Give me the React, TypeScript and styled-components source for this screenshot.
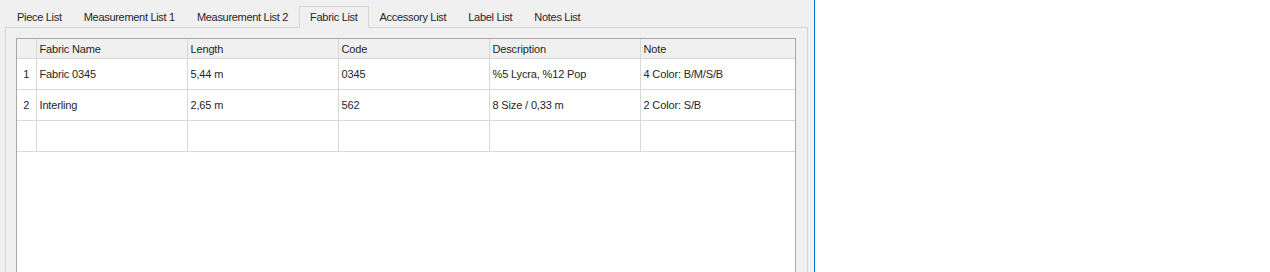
import React from 'react';
import styled, { createGlobalStyle } from 'styled-components';

const GlobalStyle = createGlobalStyle`
  html, body {
    margin: 0;
    padding: 0;
    background: #ffffff;
  }
  body {
    font-family: 'Liberation Sans', Arial, sans-serif;
    font-size: 11px;
    letter-spacing: -0.15px;
    color: #262626;
  }
`;

const tabs = [
  'Piece List',
  'Measurement List 1',
  'Measurement List 2',
  'Fabric List',
  'Accessory List',
  'Label List',
  'Notes List',
];

const columns = [
  { title: 'Fabric Name', width: 151 },
  { title: 'Length', width: 151 },
  { title: 'Code', width: 151 },
  { title: 'Description', width: 151 },
  { title: 'Note', width: 155 },
];

const rows = [
  ['Fabric 0345', '5,44 m', '0345', '%5 Lycra, %12 Pop', '4 Color: B/M/S/B'],
  ['Interling', '2,65 m', '562', '8 Size / 0,33 m', '2 Color: S/B'],
  ['', '', '', '', ''],
];

const App = () => {
  const active = 'Fabric List';

  return (
    <>
      <GlobalStyle />
      <Window>
        <TabBar>
          { tabs.map((tab) => (
            <Tab key={ tab } $active={ tab === active }>
              { tab }
            </Tab>
          )) }
        </TabBar>
        <Pane>
          <TableView>
            <Grid>
              <colgroup>
                <col style={{ width: 19 }} />
                { columns.map((c) => (
                  <col key={ c.title } style={{ width: c.width }} />
                )) }
              </colgroup>
              <thead>
                <tr>
                  <Corner />
                  { columns.map((c) => (
                    <HeadCell key={ c.title }>{ c.title }</HeadCell>
                  )) }
                </tr>
              </thead>
              <tbody>
                { rows.map((row, index) => (
                  <tr key={ index }>
                    <RowNumber>{ row[0] ? index + 1 : '' }</RowNumber>
                    { row.map((value, i) => (
                      <Cell key={ i }>{ value }</Cell>
                    )) }
                  </tr>
                )) }
              </tbody>
            </Grid>
          </TableView>
        </Pane>
      </Window>
    </>
  );
};

export default App;

const Window = styled.div`
  width: 814px;
  height: 272px;
  background: #f0f0f0;
  border-right: 1px solid #0078d7;
  display: flex;
  flex-direction: column;
  overflow: hidden;
`;

const TabBar = styled.div`
  display: flex;
  align-items: flex-end;
  padding: 6px 0 0 6px;
  height: 21px;
  position: relative;
  z-index: 1;
`;

const Tab = styled.div<{ $active: boolean }>`
  height: ${ (p) => (p.$active ? '22px' : '20px') };
  line-height: 19px;
  padding: 0 10px;
  box-sizing: border-box;
  white-space: nowrap;
  letter-spacing: -0.3px;
  background: #f0f0f0;
  border: 1px solid ${ (p) => (p.$active ? '#d4d4d4' : 'transparent') };
  border-bottom: none;
  margin-bottom: ${ (p) => (p.$active ? '-1px' : '0') };
  padding-top: ${ (p) => (p.$active ? '1px' : '0') };
`;

const Pane = styled.div`
  flex: 1;
  display: flex;
  margin-left: 5px;
  width: 803px;
  box-sizing: border-box;
  border: 1px solid #d4d4d4;
  border-bottom: none;
  padding: 10px 11px 0 10px;
`;

const TableView = styled.div`
  flex: 1;
  background: #ffffff;
  border: 1px solid #a8a8a8;
  border-bottom: none;
`;

const Grid = styled.table`
  border-collapse: collapse;
  table-layout: fixed;
  width: 778px;
`;

const HeadCell = styled.th`
  height: 19px;
  padding: 0 3px;
  background: #f0f0f0;
  border-left: 1px solid #d8d8d8;
  border-bottom: 1px solid #d8d8d8;
  font-weight: normal;
  text-align: left;
  white-space: nowrap;
`;

const Corner = styled(HeadCell)`
  border-left: none;
`;

const Cell = styled.td`
  height: 30px;
  padding: 0 3px;
  border-left: 1px solid #d8d8d8;
  border-bottom: 1px solid #d8d8d8;
  white-space: nowrap;
  overflow: hidden;
`;

const RowNumber = styled.td`
  height: 30px;
  padding: 0;
  text-align: center;
  border-bottom: 1px solid #d8d8d8;
`;
